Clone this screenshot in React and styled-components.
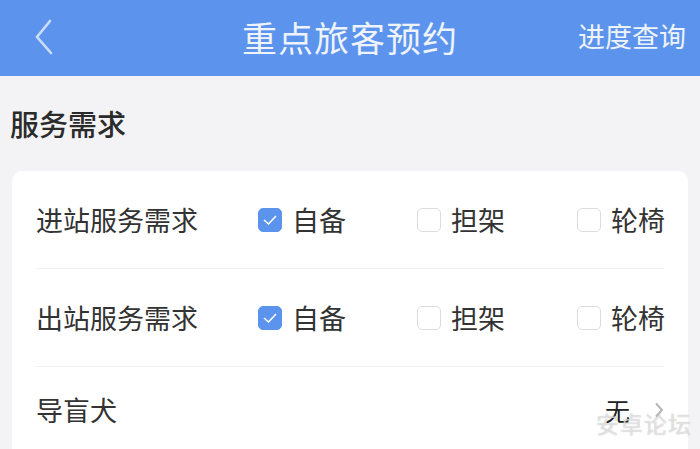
import React, { useState } from 'react';
import styled, { createGlobalStyle } from 'styled-components';

const GlobalStyle = createGlobalStyle`
	html, body {
		margin: 0;
		padding: 0;
		background: #f3f3f5;
		font-family: "Noto Sans CJK SC", "Noto Sans", sans-serif;
	}
`;

const Page = styled.div`
	width: 700px;
	height: 449px;
	overflow: hidden;
	position: relative;
	background: #f3f3f5;
`;

const Header = styled.header`
	height: 76px;
	background: #5c94ed;
	display: grid;
	grid-template-columns: 1fr auto 1fr;
	align-items: center;
	padding: 0 14px;
	color: #eef3fc;
`;

const Back = styled.button`
	justify-self: start;
	margin-left: 16px;
	background: none;
	border: 0;
	padding: 0;
	display: flex;
	align-items: center;
`;

const Title = styled.h1`
	margin: 0 0 4px 0;
	font-size: 35px;
	font-weight: 400;
	letter-spacing: 1px;
`;

const Link = styled.span`
	justify-self: end;
	font-size: 27px;
	margin-bottom: 6px;
`;

const SectionTitle = styled.h2`
	margin: 0;
	height: 93px;
	display: flex;
	align-items: center;
	padding: 0 10px 2px;
	font-size: 29px;
	font-weight: 500;
	color: #2b2b2b;
`;

const Card = styled.div`
	margin: 0 12px;
	background: #fff;
	border-radius: 10px;
	padding: 0 24px;
`;

const Row = styled.div`
	height: 97px;
	display: grid;
	grid-template-columns: 222px 159px 160px auto;
	align-items: center;
	border-bottom: 1px solid #f0f0f2;
	font-size: 27px;
	color: #333;
	white-space: nowrap;
`;

const Option = styled.label`
	display: flex;
	align-items: center;
	gap: 10px;
	cursor: pointer;
`;

const Box = styled.span`
	width: 24px;
	height: 24px;
	flex: none;
	box-sizing: border-box;
	border-radius: 5px;
	border: 1px solid ${(p) => (p.checked ? '#5c94ed' : '#dcdcdc')};
	background: ${(p) => (p.checked ? '#5c94ed' : '#fff')};
	display: flex;
	align-items: center;
	justify-content: center;
`;

const SimpleRow = styled.div`
	height: 97px;
	display: flex;
	align-items: center;
	justify-content: space-between;
	font-size: 27px;
	color: #333;
	padding-bottom: 12px;
	box-sizing: border-box;
`;

const Value = styled.div`
	display: flex;
	align-items: center;
	gap: 24px;
	color: #222;
	font-size: 25px;

	svg {
		position: relative;
		z-index: 2;
	}
`;

const Watermark = styled.div`
	position: absolute;
	left: 596px;
	top: 406px;
	font-size: 23px;
	color: rgba(255, 255, 255, 0.6);
	text-shadow: 0 0 1px rgba(120, 120, 120, 0.6);
	letter-spacing: 1px;
	pointer-events: none;
	z-index: 1;
`;

const options = ['自备', '担架', '轮椅'];

const Check = () => (
	<svg width="16" height="12" viewBox="0 0 16 12">
		<polyline points="2,6 6.5,10 14,2" fill="none" stroke="#fff" strokeWidth="1.6" />
	</svg>
);

const ServiceRow = ({ label, value, onChange }) => (
	<Row>
		<span>{label}</span>
		{options.map((o) => (
			<Option key={o} onClick={() => onChange(o)}>
				<Box checked={value === o}>{value === o && <Check />}</Box>
				{o}
			</Option>
		))}
	</Row>
);

const App = () => {
	const [inbound, setInbound] = useState('自备');
	const [outbound, setOutbound] = useState('自备');

	return (
		<Page>
			<GlobalStyle />
			<Header>
				<Back aria-label="返回">
					<svg width="26" height="40" viewBox="0 0 26 40">
						<polyline
							points="20,3 7,19 21,35"
							fill="none"
							stroke="#f2f6fd"
							strokeWidth="2.6"
							strokeLinecap="round"
							opacity="0.75"
						/>
					</svg>
				</Back>
				<Title>重点旅客预约</Title>
				<Link>进度查询</Link>
			</Header>
			<SectionTitle>服务需求</SectionTitle>
			<Card>
				<ServiceRow label="进站服务需求" value={inbound} onChange={setInbound} />
				<ServiceRow label="出站服务需求" value={outbound} onChange={setOutbound} />
				<SimpleRow>
					<span>导盲犬</span>
					<Value>
						无
						<svg width="10" height="16" viewBox="0 0 10 16">
							<polyline points="2,1.5 8,8 2,14.5" fill="none" stroke="#b5b5b5" strokeWidth="2" />
						</svg>
					</Value>
				</SimpleRow>
			</Card>
			<Watermark>安卓论坛</Watermark>
		</Page>
	);
};

export default App;
